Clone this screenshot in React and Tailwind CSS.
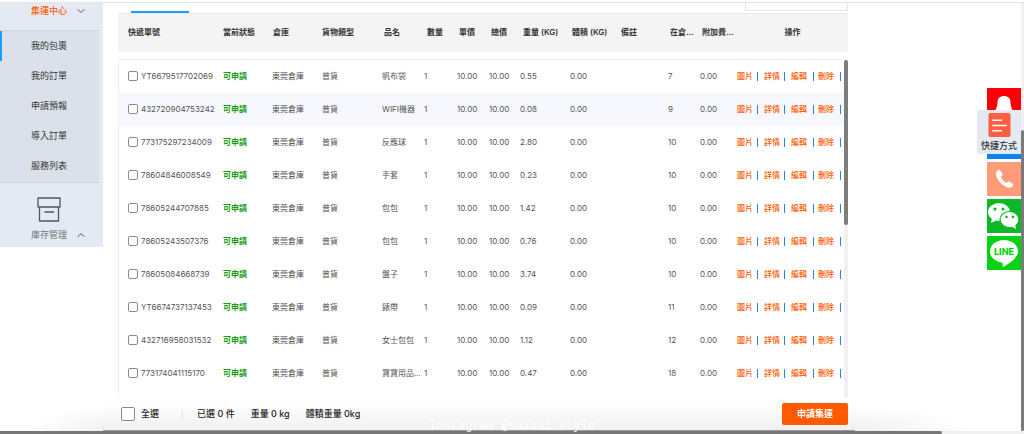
import { useState } from "react";
import { ChevronDown, ChevronUp } from "lucide-react";

const MENU = ["我的包裹", "我的訂單", "申請預報", "導入訂單", "服務列表"];

const HEADERS = ["快遞單號", "當前狀態", "倉庫", "貨物類型", "品名", "數量", "單價", "總價", "重量 (KG)", "體積 (KG)", "備註", "在倉...", "附加費..."];

const PARCELS = [
  { no: "YT6679517702069", name: "帆布袋", weight: "0.55", days: 7 },
  { no: "432720904753242", name: "WIFI機器", weight: "0.08", days: 9 },
  { no: "773175297234009", name: "反應球", weight: "2.80", days: 10 },
  { no: "78604846008549", name: "手套", weight: "0.23", days: 10 },
  { no: "78605244707885", name: "包包", weight: "1.42", days: 10 },
  { no: "78605243507376", name: "包包", weight: "0.76", days: 10 },
  { no: "78605084668739", name: "盤子", weight: "3.74", days: 10 },
  { no: "YT6674737137453", name: "錶帶", weight: "0.09", days: 11 },
  { no: "432716958031532", name: "女士包包", weight: "1.12", days: 12 },
  { no: "773174041115170", name: "寶寶用品...", weight: "0.47", days: 18 },
];

const CHECKBOX = "shrink-0 appearance-none border border-[#8c8c8c] bg-white checked:bg-[#ff5a00]";

function Sidebar() {
  return (
    <nav className="w-[103px] shrink-0 self-start bg-[#e3eaf4] text-[9px] text-[#333]">
      <button type="button" className="flex h-4 w-full items-center gap-2 pl-[31px] font-medium text-[#ff5a00]">
        集運中心
        <ChevronDown size={12} className="text-[#555]" />
      </button>
      <ul className="mt-[11px] mr-1 border-y border-[#cfd6e0] bg-[#dbe1eb] pb-px">
        {MENU.map((item, i) => (
          <li key={item}>
            <a
              href="#"
              className={`flex h-[30px] items-center border-l-2 pl-[29px] ${i === 0 ? "border-[#1a9ff5]" : "border-transparent"}`}
            >
              {item}
            </a>
          </li>
        ))}
      </ul>
      <button type="button" className="w-full pt-[14px] pb-1 text-[#777]">
        <svg className="ml-[37px] h-[25px] w-6" viewBox="0 0 24 25" fill="none" stroke="#555" strokeWidth="1.3" strokeLinejoin="round">
          <path d="M1 1h22v9H1z" />
          <path d="M2.500 10v14h19V10M7.500 15h9.500" />
        </svg>
        <span className="mt-[5px] flex h-4 items-center gap-2 pl-[31px]">
          庫存管理
          <ChevronUp size={12} className="text-[#555]" />
        </span>
      </button>
    </nav>
  );
}

function HeaderTable() {
  return (
    <table className="w-full table-fixed border-t border-[#e6e9f1] bg-[#f4f4f4] text-left">
      <colgroup>
        <col className="w-[100px]" />
        <col className="w-[50px]" />
        <col className="w-[49px]" />
        <col className="w-[62px]" />
        <col className="w-[43px]" />
        <col className="w-[32px]" />
        <col className="w-[32px]" />
        <col className="w-[32px]" />
        <col className="w-[49px]" />
        <col className="w-[49px]" />
        <col className="w-[49px]" />
        <col className="w-[32px]" />
        <col className="w-[40px]" />
        <col className="w-[111px]" />
      </colgroup>
      <thead>
        <tr className="h-[38px] text-[#333] *:pb-0.5">
          {HEADERS.map((h) => (
            <th key={h} className="pl-[5px] font-semibold whitespace-nowrap first:pl-[10px]">{h}</th>
          ))}
          <th className="text-center font-semibold">操作</th>
        </tr>
      </thead>
    </table>
  );
}

function Actions() {
  return (
    <div className="flex leading-[9px] font-medium text-[#ff5a00]">
      <button type="button" className="border-r border-[#2584f0] pr-1">圖片</button>
      <button type="button" className="ml-1.5 border-r border-[#2584f0] pr-1">詳情</button>
      <button type="button" className="ml-1.5 border-r border-[#2584f0] pr-1.5">編輯</button>
      <button type="button" className="ml-1 border-r border-[#2584f0] pr-1.5">刪除</button>
    </div>
  );
}

function ParcelTable({ selected, toggle }) {
  return (
    <div className="mt-[7px] flex min-h-0 flex-1 overflow-hidden border-t border-l border-[#f0f0f0]">
      <div className="min-w-0 flex-1">
        <table className="w-full table-fixed text-left text-[#555]">
          <colgroup>
            <col className="w-[99px]" />
            <col className="w-[49px]" />
            <col className="w-[50px]" />
            <col className="w-[60px]" />
            <col className="w-[42px]" />
            <col className="w-[33px]" />
            <col className="w-[32px]" />
            <col className="w-[31px]" />
            <col className="w-[50px]" />
            <col className="w-[49px]" />
            <col className="w-[49px]" />
            <col className="w-[32px]" />
            <col className="w-[37px]" />
            <col className="w-[112px]" />
          </colgroup>
          <tbody>
            {PARCELS.map((p, i) => (
              <tr key={p.no} className={`h-[33px] whitespace-nowrap *:pl-[5px] ${i === 1 ? "bg-[#f6f8fd]" : ""}`}>
                <td>
                  <label className="flex items-center gap-[3px] pl-1">
                    <input
                      type="checkbox"
                      className={`size-[10px] rounded-[2px] ${CHECKBOX}`}
                      checked={selected.includes(p.no)}
                      onChange={() => toggle(p.no)}
                    />
                    {p.no}
                  </label>
                </td>
                <td className="font-bold text-[#169b16]">可申請</td>
                <td>東莞倉庫</td>
                <td>普貨</td>
                <td>{p.name}</td>
                <td>1</td>
                <td>10.00</td>
                <td>10.00</td>
                <td>{p.weight}</td>
                <td>0.00</td>
                <td></td>
                <td>{p.days}</td>
                <td>0.00</td>
                <td><Actions /></td>
              </tr>
            ))}
          </tbody>
        </table>
      </div>
      {/* list scrollbar */}
      <div className="w-1 shrink-0 bg-[#f1f1f1]">
        <div className="h-[49%] rounded-sm bg-[#7d7d7d]" />
      </div>
    </div>
  );
}

function Footer({ count, allSelected, toggleAll }) {
  return (
    <footer className="flex h-[34px] shrink-0 text-[9px] text-[#222]">
      <div className="w-[103px] shrink-0 bg-[radial-gradient(ellipse_at_bottom_right,#f1f1f1,#fff_50%)]" />
      <div className="flex flex-1 items-center border-b border-[#9a9a9a] bg-linear-to-b from-white from-20% to-[#f0f0f0] pt-px pr-[7px] pl-[18px]">
        <label className="flex items-center gap-1.5 font-medium">
          <input type="checkbox" className={`size-[14px] rounded-[2px] ${CHECKBOX}`} checked={allSelected} onChange={toggleAll} />
          全選
        </label>
        <span className="mr-[14px] ml-[23px] h-[9px] border-l border-[#dfe3ee]" />
        <div className="flex gap-4 font-medium">
          <span>已選 {count} 件</span>
          <span>重量 0 kg</span>
          <span>體積重量 0kg</span>
        </div>
        <button type="button" className="ml-auto h-[22px] w-[66px] rounded-[2px] bg-[#ff5a00] font-bold text-white">
          申請集運
        </button>
      </div>
      <div className="w-[166px] shrink-0 bg-[radial-gradient(ellipse_at_bottom_left,#f0f0f0,#fff_50%)]" />
    </footer>
  );
}

function ContactDock() {
  return (
    <aside className="absolute top-[88px] right-[3px] w-11">
      <div className="ml-[10px] flex flex-col gap-[3px]">
        <a href="#" aria-label="QQ" className="h-[34px] bg-[#fb0007]">
          <svg viewBox="0 0 34 34" fill="#fff">
            <path d="M8 24C9 20 10.500 18 10.500 15C10.500 10 13 8 17 8s6.500 2 6.500 7c0 3 1.500 5 2.500 9z" />
          </svg>
        </a>
        <a href="#" aria-label="聯絡客服" className="h-[34px] bg-[#0a84ee]" />
        <a href="#" aria-label="電話" className="h-[34px] bg-[#ff9b76]">
          <svg viewBox="0 0 34 34" fill="#fff">
            <path d="M10 9.200C11.200 7.600 12.600 7.500 13.300 8.500l2 3.200c.5 1 .2 1.700-.5 2.300l-1.100.9c1.200 2.600 3 4.600 5.600 6l1.200-1c.7-.6 1.400-.7 2.200-.2l3 2.100c.9.700.8 1.700-.7 2.900c-1.800 1.500-4.300 1.200-7.300-.6C13.500 21.700 10.600 18.200 9.300 14.200C8.700 12.200 8.900 10.600 10 9.200z" />
          </svg>
        </a>
        <a href="#" aria-label="WeChat" className="h-[34px] bg-[#0bb927]">
          <svg viewBox="0 0 34 34">
            <ellipse cx="12" cy="13" rx="11" ry="9" fill="#fff" />
            <path d="M5 19l-1 5 6-3z" fill="#fff" />
            <ellipse cx="22.500" cy="20.500" rx="9.500" ry="8" fill="#fff" stroke="#0bb927" strokeWidth="1.2" />
            <path d="M24 27l5 3-1-5z" fill="#fff" />
            <g fill="#0bb927">
              <circle cx="8" cy="10" r="1.600" />
              <circle cx="16" cy="10" r="1.600" />
              <circle cx="19.500" cy="18" r="1.300" />
              <circle cx="26" cy="18" r="1.300" />
            </g>
          </svg>
        </a>
        <a href="#" aria-label="LINE" className="h-[34px] bg-[#08d313]">
          <svg viewBox="0 0 34 34">
            <path d="M17 4C9 4 3 9 3 15.500C3 21 8 25.500 14.500 26.500c1.300.2 1.500 1 1.200 3.500c0 .8.500.9 1.200.5C22 27.500 31 22 31 15.500C31 9 25 4 17 4z" fill="#fff" />
            <text x="17" y="19" textAnchor="middle" fontSize="9" fontWeight="800" fill="#08d313">LINE</text>
          </svg>
        </a>
      </div>
      <button type="button" className="absolute top-[22px] left-0 flex h-11 w-11 flex-col items-center bg-[#e3eaf4] pt-[3px] text-[9px] text-[#333]">
        <svg className="h-[25px] w-[23px]" viewBox="0 0 23 25">
          <rect width="23" height="25" rx="2" fill="#ff5f40" />
          <path d="M4 7.500h10M4 13h15M4 18.500h10" stroke="#fff" strokeWidth="1.600" />
        </svg>
        <span className="mt-px leading-[16px] font-medium whitespace-nowrap">快捷方式</span>
      </button>
    </aside>
  );
}

export default function App() {
  const [selected, setSelected] = useState([]);
  const allSelected = selected.length === PARCELS.length;

  const toggle = (no) =>
    setSelected((prev) => (prev.includes(no) ? prev.filter((n) => n !== no) : [...prev, no]));

  return (
    <div className="relative flex h-screen flex-col overflow-hidden bg-white pt-0.5 font-['Inter','Noto_Sans_CJK_TC',sans-serif] text-[8px]">
      <div className="flex min-h-0 flex-1 border-t border-[#e4e4e6]">
        <div className="flex min-w-0 flex-1 flex-col">
          <div className="flex min-h-0 flex-1">
            <Sidebar />
            <main className="mr-[173px] ml-[15px] flex min-w-0 flex-1 flex-col">
              <div className="flex h-[10px] shrink-0 items-end justify-between pl-[13px]">
                <div className="h-0.5 w-[58px] bg-[#1a9ff5]" />
                <div className="h-full w-[103px] pb-0.5">
                  <div className="h-full border border-t-0 border-[#e3e5ea]" />
                </div>
              </div>
              <HeaderTable />
              <ParcelTable selected={selected} toggle={toggle} />
            </main>
          </div>
          <Footer
            count={selected.length}
            allSelected={allSelected}
            toggleAll={() => setSelected(allSelected ? [] : PARCELS.map((p) => p.no))}
          />
        </div>
        {/* page scrollbar */}
        <div className="flex w-[3px] shrink-0 flex-col bg-[#f0f0f0] pt-[127px]">
          <div className="flex-1 rounded-sm bg-[#7a7a7a]" />
        </div>
      </div>
      <div className="h-[3px] shrink-0 bg-[#f0f0f0]">
        <div className="h-full w-[92%] rounded-r-sm bg-[#777]" />
      </div>
      <p className="pointer-events-none absolute inset-x-0 bottom-0 text-center font-['Liberation_Mono',monospace] text-[12px] leading-4 text-white">
        Instagram @saisai.style
      </p>
      <ContactDock />
    </div>
  );
}
